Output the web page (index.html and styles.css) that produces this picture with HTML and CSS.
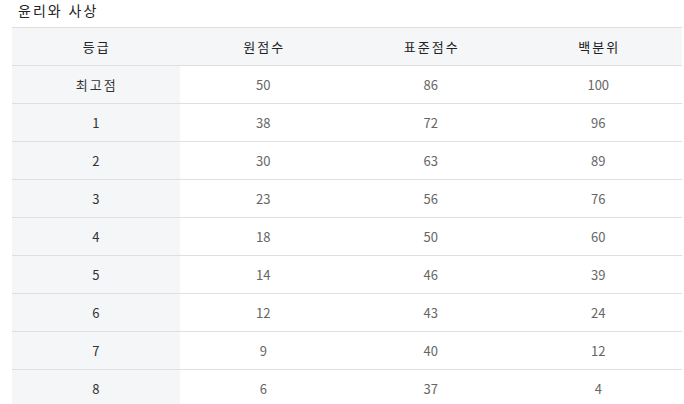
FILE: index.html
```html
<!DOCTYPE html>
<html lang="ko">
<head>
<meta charset="utf-8">
<link rel="stylesheet" href="styles.css">
</head>
<body>
<div class="wrap">
  <h2 class="title">윤리와 사상</h2>
  <table class="grade-table">
    <thead>
      <tr><th>등급</th><th>원점수</th><th>표준점수</th><th>백분위</th></tr>
    </thead>
    <tbody>
      <tr><td class="label">최고점</td><td>50</td><td>86</td><td>100</td></tr>
      <tr><td class="label">1</td><td>38</td><td>72</td><td>96</td></tr>
      <tr><td class="label">2</td><td>30</td><td>63</td><td>89</td></tr>
      <tr><td class="label">3</td><td>23</td><td>56</td><td>76</td></tr>
      <tr><td class="label">4</td><td>18</td><td>50</td><td>60</td></tr>
      <tr><td class="label">5</td><td>14</td><td>46</td><td>39</td></tr>
      <tr><td class="label">6</td><td>12</td><td>43</td><td>24</td></tr>
      <tr><td class="label">7</td><td>9</td><td>40</td><td>12</td></tr>
      <tr><td class="label">8</td><td>6</td><td>37</td><td>4</td></tr>
    </tbody>
  </table>
</div>
</body>
</html>
```
FILE: styles.css
```css
html, body {
  margin: 0;
  padding: 0;
  background: #fff;
}
body {
  font-family: "Noto Sans CJK KR", "Noto Sans", sans-serif;
  color: #333;
}
.wrap {
  padding: 0 0 0 12px;
}
.title {
  margin: 0 0 7px 0;
  padding-left: 6px;
  font-size: 14px;
  font-weight: normal;
  line-height: 20px;
  letter-spacing: 2px;
  color: #222;
}
.grade-table {
  width: 670px;
  border-collapse: collapse;
  table-layout: fixed;
}
.grade-table th,
.grade-table td {
  height: 37px;
  padding: 0;
  text-align: center;
  font-size: 13px;
  font-weight: normal;
  border-top: 1px solid #dedfe1;
  border-bottom: 1px solid #dedfe1;
}
.grade-table th {
  background: #f5f6f8;
  color: #222;
  letter-spacing: 2px;
  padding-left: 2px;
}
.grade-table td {
  color: #666;
}
.grade-table td.label {
  background: #f5f6f8;
  color: #333;
  letter-spacing: 2px;
  padding-left: 2px;
}
```
